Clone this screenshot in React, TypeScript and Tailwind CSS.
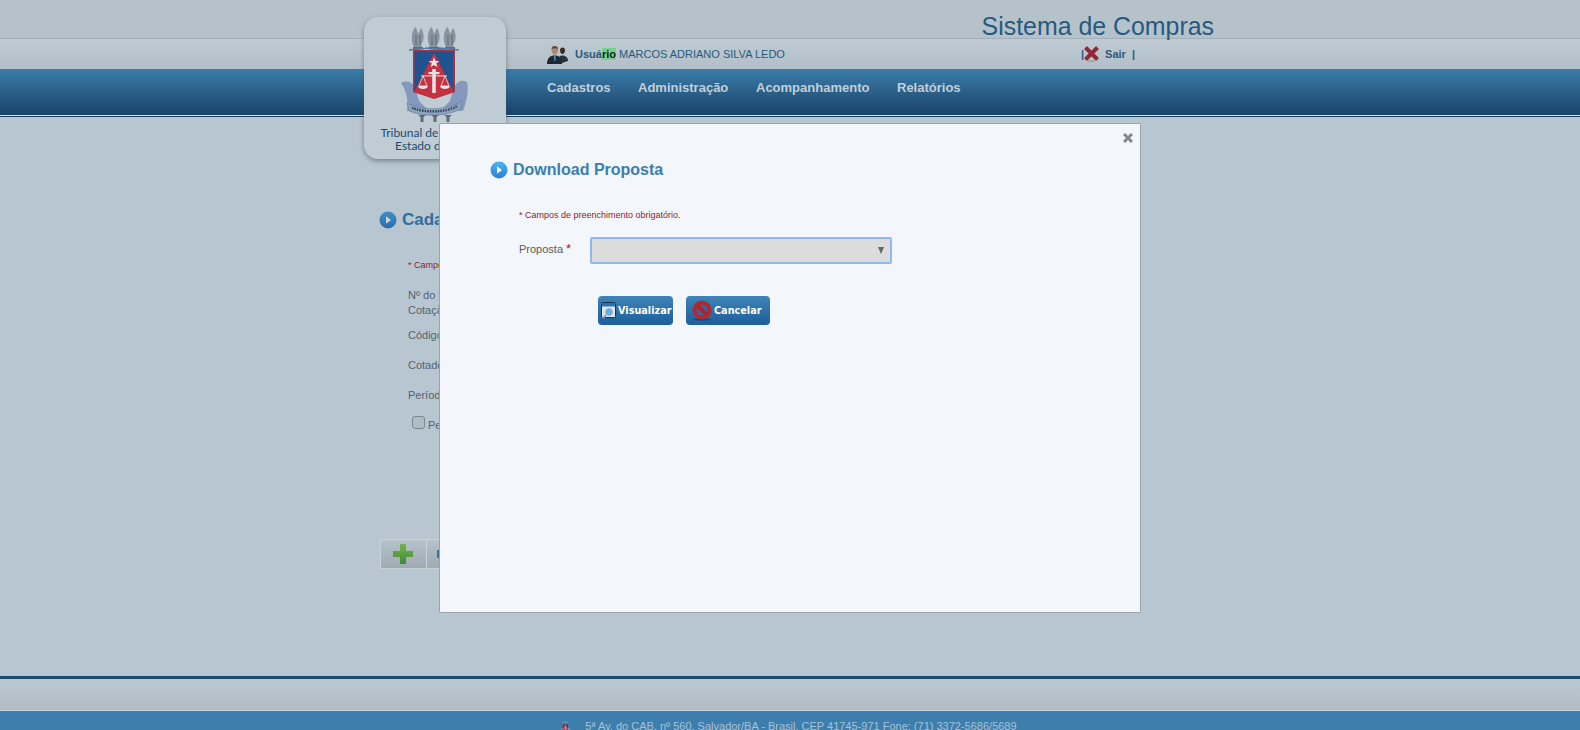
import React from "react";

const navItems = [
  { label: "Cadastros", className: "w-[91px]" },
  { label: "Administração", className: "w-[118px]" },
  { label: "Acompanhamento", className: "w-[141px]" },
  { label: "Relatórios", className: "" },
];

const ArrowIcon = ({ dim }: { dim?: boolean }) => (
  <svg width="18" height="18" viewBox="0 0 18 18" className="shrink-0">
    <defs>
      <linearGradient id={dim ? "arrowDim" : "arrowLit"} x1="0" y1="0" x2="0" y2="1">
        <stop offset="0" stopColor={dim ? "#3f8fc4" : "#49b4f5"} />
        <stop offset="1" stopColor={dim ? "#2a6ca8" : "#2f7fd0"} />
      </linearGradient>
    </defs>
    <circle cx="9" cy="9" r="8.5" fill={`url(#${dim ? "arrowDim" : "arrowLit"})`} />
    <path d="M7 5.2 L12 9 L7 12.8 Z" fill={dim ? "#c9d6df" : "#f3f6fb"} />
  </svg>
);

const Crest = ({ size = 68 }: { size?: number }) => (
  <svg width={size} height={size * 1.41} viewBox="0 0 68 96" className="block">
    {/* torches */}
    {[17, 33, 49].map((x) => (
      <g key={x}>
        <path d={`M${x - 6} 14 C${x - 7} 6 ${x - 4} 1 ${x - 2} 0 L${x} 7 L${x + 3} 1 C${x + 7} 7 ${x + 6} 14 ${x + 3} 18 L${x + 4} 21 L${x - 4} 21 Z`} fill="#87949f" />
        <path d={`M${x - 2} 8 V18 M${x + 2} 8 V18`} stroke="#5c6a76" strokeWidth="1" />
        <rect x={x - 5} y="20" width="10" height="2.5" fill="#5f6c77" />
      </g>
    ))}
    <path d="M8 23 L28 21 M24 21 L44 23 M38 21 L58 23" stroke="#4d7fa8" strokeWidth="1.5" />
    {/* ribbons */}
    <path d="M0 56 C6 53 11 55 14 60 L18 74 L26 82 L6 84 C8 72 4 62 0 56 Z" fill="#8499bd" />
    <path d="M66 55 C60 52 56 55 53 60 L49 74 L41 82 L62 84 C66 74 68 62 66 55 Z" fill="#8499bd" />
    {/* shield */}
    <path d="M12 23 H54 V65 L33 72 L12 65 Z" fill="#a5343f" />
    <path d="M13.5 24.5 H52.5 V64 L33 70.5 L13.5 64 Z" fill="#20528f" />
    <path d="M33 26 L53 65 L33 71 L13 65 Z" fill="#c7303f" />
    <path d="M33 30 L34.4 34 H38.6 L35.2 36.4 L36.5 40.4 L33 38 L29.5 40.4 L30.8 36.4 L27.4 34 H31.6 Z" fill="#e8e8ea" />
    <rect x="31.2" y="42" width="3.6" height="24" fill="#e2e4e8" />
    <rect x="27.5" y="45" width="11" height="2.2" fill="#e2e4e8" />
    <path d="M20 49 H46" stroke="#e2e4e8" strokeWidth="1" />
    <path d="M18 59 L22 49 L26 59 Z M40 59 L44 49 L48 59 Z" fill="none" stroke="#e2e4e8" strokeWidth="0.8" />
    <path d="M17 59 H27 C26.5 63 17.5 63 17 59 Z M39 59 H49 C48.5 63 39.5 63 39 59 Z" fill="#e2e4e8" />
    {/* motto ribbon */}
    <path d="M6 76 C20 84 46 84 61 74 L60 82 C46 90 20 90 8 84 Z" fill="#8ea3bd" stroke="#5a6f8c" strokeWidth="0.5" />
    <path d="M11 81 C24 86 44 86 57 79" stroke="#33485f" strokeWidth="2.4" strokeDasharray="1.6 1" fill="none" />
    {/* torch bases */}
    {[21, 34, 47].map((x) => (
      <path key={x} d={`M${x - 4} 88 H${x + 4} L${x + 1.5} 90 V95 H${x - 1.5} V90 Z`} fill="#5e6a74" />
    ))}
  </svg>
);

const UsersIcon = () => (
  <svg width="21" height="20" viewBox="0 0 21 20">
    <path d="M13 6 C13 2.5 18 2.5 18 6 C18 9 16.5 10 15.5 10 C14.5 10 13 9 13 6 Z" fill="#3a2a20" />
    <path d="M11 18 C11 13 13 11.5 15.5 11.5 C18 11.5 21 13 21 17 L15 19 Z" fill="#26323a" />
    <path d="M4.5 5 C4.5 1 11 1 11 5 C11 9 9.5 10.5 7.8 10.5 C6 10.5 4.5 9 4.5 5 Z" fill="#b08a68" />
    <path d="M4.5 5 C4.5 1 11 1 11 5 C9 4 7 4 4.5 5 Z" fill="#5a4a3a" />
    <path d="M0 20 C0 14 3 11.5 7.8 11.5 C12.5 11.5 15 14 15 20 Z" fill="#20292f" />
    <path d="M6.8 12 H8.8 L8.3 17 H7.3 Z" fill="#3f8fc4" />
  </svg>
);

const VisualizarIcon = () => (
  <svg width="15" height="17" viewBox="0 0 15 17">
    <rect x="0.5" y="0.5" width="14" height="15" rx="1" fill="#dfe8ef" stroke="#1c3348" />
    <rect x="1" y="1" width="13" height="3.5" fill="#2a73ad" />
    <circle cx="8" cy="10" r="3.6" fill="#67aee0" stroke="#9fb5c4" />
    <path d="M5 13 L2 16" stroke="#8fa3b0" strokeWidth="2" />
  </svg>
);

const CancelarIcon = () => (
  <svg width="20" height="21" viewBox="0 0 20 21">
    <ellipse cx="10" cy="19.5" rx="9" ry="1.2" fill="#174a75" />
    <circle cx="10" cy="10" r="7.5" fill="#2a6ca3" stroke="#b3272f" strokeWidth="4" />
    <path d="M5 5 L15 15" stroke="#a9252e" strokeWidth="4" />
  </svg>
);

const CloseGlyph = () => (
  <svg width="10" height="10" viewBox="0 0 10 10" className="block">
    <path d="M1 1 L9 9 M9 1 L1 9" stroke="#858a8f" strokeWidth="3" />
  </svg>
);

const SairIcon = () => (
  <svg width="15" height="16" viewBox="0 0 15 16" className="block">
    <ellipse cx="7.5" cy="15" rx="4" ry="1" fill="#9aa6ae" />
    <path d="M1.5 1.5 L13.5 13.5 M13.5 1.5 L1.5 13.5" stroke="#8e2b37" strokeWidth="4" />
  </svg>
);

const backgroundRows = [
  { label: "Código", className: "mt-[10px]" },
  { label: "Cotador", className: "mt-[16px]" },
  { label: "Período", className: "mt-[16px]" },
];

export default function App() {
  return (
    <div className="flex h-[730px] w-full flex-col overflow-hidden bg-[#b8c6d1] font-['Liberation_Sans',Arial,sans-serif]">
      <header className="shrink-0">
        {/* Logo card, hangs over the header */}
        <div className="relative mx-auto h-0 w-[852px]">
          <div className="absolute left-0 top-[17px] z-10 flex h-[142px] w-[142px] flex-col items-center rounded-[14px] bg-[#c0ccd4] pt-[10px] shadow-[0_2px_5px_rgba(60,75,90,0.55)]">
            <Crest />
            <p className="mt-[3px] pl-[4px] text-center font-['Lato',sans-serif] text-[12px] leading-[13px] whitespace-nowrap text-[#1e4a70]">
              Tribunal de Justiça do
              <br />
              Estado da Bahia
            </p>
          </div>
        </div>
        <div className="h-[39px] border-b border-[#a3afb7] bg-[#b5c2ca]">
          <div className="mx-auto flex w-[852px] justify-end pr-[2px] pt-[10px]">
            <span className="text-[24.9px] leading-[33px] text-[#27597f] whitespace-nowrap">Sistema de Compras</span>
          </div>
        </div>
        <div className="h-[30px] bg-gradient-to-b from-[#bfcbd3] to-[#b2bfc8]">
          <div className="mx-auto flex h-full w-[852px] items-center pl-[183px] text-[11px] text-[#27597f]">
            <UsersIcon />
            <span className="ml-[7px] w-[506px] whitespace-nowrap">
              <b>Usuá</b>
              <b className="bg-[#78cf8c] text-[#10261c]">rio</b> MARCOS ADRIANO SILVA LEDO
            </span>
            <span className="flex items-center font-bold">
              | <span className="mr-[6px]"><SairIcon /></span> Sair <span className="ml-[6px]">|</span>
            </span>
          </div>
        </div>
        <div className="h-[46px] bg-gradient-to-b from-[#3b7ea9] to-[#1a436a]">
          <nav className="mx-auto flex h-[37px] w-[852px] items-center pl-[183px] text-[13px] font-bold text-[#c2cfd9]">
            {navItems.map((item) => (
              <span key={item.label} className={`whitespace-nowrap ${item.className}`}>
                {item.label}
              </span>
            ))}
          </nav>
        </div>
        <div className="h-[1px] bg-[#d6e0e6]" />
        <div className="h-[1px] bg-[#17405f]" />
      </header>

      <main className="relative mx-auto w-[852px] flex-1">
        {/* Page behind the modal */}
        <div className="pl-[16px] pt-[90px]">
          <div className="-ml-[1px] flex items-center gap-[5px]">
            <ArrowIcon dim />
            <h1 className="text-[17px] font-bold whitespace-nowrap text-[#2e6f9f]">Cadastrar</h1>
          </div>
          <div className="pl-[28px] text-[11px] text-[#55626d]">
            <p className="mt-[26px] text-[9px] text-[#8a1f30]">* Campos de preenchimento obrigatório.</p>
            <p className="mt-[16px] leading-[15px]">
              Nº do
              <br />
              Cotação
            </p>
            {backgroundRows.map((row) => (
              <p key={row.label} className={`leading-[14px] ${row.className}`}>
                {row.label}
              </p>
            ))}
            <div className="ml-[4px] mt-[10px] flex items-center gap-[3px]">
              <span className="h-[13px] w-[13px] rounded-[3px] border border-[#7c8890] bg-[#b0bdc6]" />
              <span className="mt-[5px]">Período</span>
            </div>
          </div>
          <div className="mt-[105px] flex h-[30px]">
            <div className="flex w-[47px] items-center justify-center border border-[#c8d2d9] bg-gradient-to-b from-[#b6c3cb] to-[#9faab1]">
              <svg width="20" height="20" viewBox="0 0 20 20" className="-ml-[2px]">
                <defs>
                  <linearGradient id="plusFill" x1="0" y1="0" x2="0" y2="1">
                    <stop offset="0" stopColor="#76b24a" />
                    <stop offset="1" stopColor="#3f8a3a" />
                  </linearGradient>
                </defs>
                <path d="M7 0 H13 V7 H20 V13 H13 V20 H7 V13 H0 V7 H7 Z" fill="url(#plusFill)" />
              </svg>
            </div>
            <div className="flex w-[60px] items-center border border-l-0 border-[#c8d2d9] bg-gradient-to-b from-[#b6c3cb] to-[#9faab1] pl-[10px]">
              <span className="h-[8px] w-[8px] bg-[#3f6f9f]" />
            </div>
          </div>
        </div>

        {/* Download modal */}
        <div className="absolute left-[75px] top-[6px] z-20 h-[490px] w-[702px] rounded-[2px] border border-[#9aa3aa] bg-[#f3f6fb]">
          <div className="absolute right-[7px] top-[9px]">
            <CloseGlyph />
          </div>
          <div className="pl-[50px] pt-[36px]">
            <div className="flex items-center gap-[5px]">
              <ArrowIcon />
              <h2 className="text-[16px] font-bold leading-[20px] text-[#3a7fb0]">Download Proposta</h2>
            </div>
          </div>
          <div className="pl-[79px]">
            <p className="mt-[29px] text-[9px] leading-[12px] text-[#8e1c2c]">* Campos de preenchimento obrigatório.</p>
            <div className="mt-[16px] flex items-center">
              <label className="mb-[2px] w-[71px] text-[11px] text-[#5a5a5a]">
                Proposta <span className="text-[13px] leading-none text-[#a01c28]">*</span>
              </label>
              <div className="flex h-[27px] w-[302px] items-center justify-end rounded-[2px] border-2 border-[#8fb6f5] bg-[#dcdcdc] pr-[6px]">
                <span className="h-0 w-0 border-x-[3.5px] border-t-[7px] border-x-transparent border-t-[#666666]" />
              </div>
            </div>
            <div className="ml-[79px] mt-[32px] flex gap-[13px]">
              <button className="flex h-[29px] w-[75px] items-center rounded-[4px] bg-gradient-to-b from-[#3f84b7] to-[#1d5e9c] pl-[3px] font-['DejaVu_Sans',sans-serif] text-[9.7px] font-bold text-white">
                <VisualizarIcon />
                <span className="ml-[2px] mt-[2px]">Visualizar</span>
              </button>
              <button className="flex h-[29px] w-[84px] items-center rounded-[4px] bg-gradient-to-b from-[#3f84b7] to-[#1d5e9c] pl-[6px] font-['DejaVu_Sans',sans-serif] text-[9.7px] font-bold text-white">
                <CancelarIcon />
                <span className="ml-[2px] mt-[2px]">Cancelar</span>
              </button>
            </div>
          </div>
        </div>
      </main>

      <footer className="shrink-0">
        <div className="h-[3px] bg-[#1b4a70]" />
        <div className="h-[32px] border-b border-[#c6d3da] bg-gradient-to-b from-[#bcc8d0] to-[#b1bdc5]" />
        <div className="h-[19px] overflow-hidden bg-[#3d7ead] pt-[7px] text-[11px] text-[#a6c2d6]">
          <div className="flex justify-center gap-[15px] pr-[2px]">
            <span className="mt-[3px]"><Crest size={9} /></span>
            <span className="whitespace-nowrap">5ª Av. do CAB, nº 560, Salvador/BA - Brasil, CEP 41745-971 Fone: (71) 3372-5686/5689</span>
          </div>
        </div>
      </footer>
    </div>
  );
}
